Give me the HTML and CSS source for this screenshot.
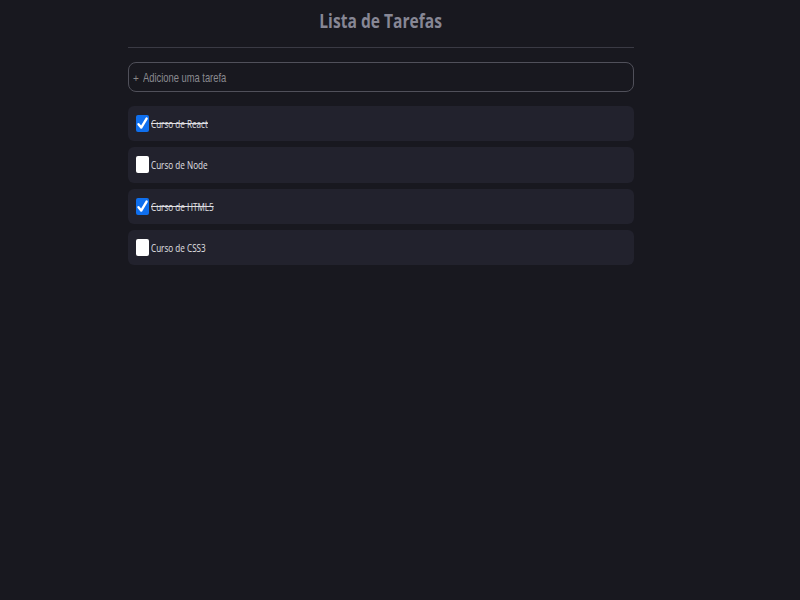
FILE: index.html
```html
<!DOCTYPE html>
<html lang="pt">
<head>
<meta charset="utf-8">
<link rel="stylesheet" href="styles.css">
<title>Lista de Tarefas</title>
</head>
<body>
<main class="app">
  <h1 class="title"><span class="title-text">Lista de Tarefas</span></h1>
  <hr class="divider">
  <div class="add">
    <span class="plus">+</span>
    <input class="add-input" type="text" placeholder="Adicione uma tarefa">
  </div>
  <ul class="list">
    <li class="item"><input type="checkbox" class="check" checked><span class="label done">Curso de React</span></li>
    <li class="item"><input type="checkbox" class="check"><span class="label">Curso de Node</span></li>
    <li class="item"><input type="checkbox" class="check" checked><span class="label done">Curso de HTML5</span></li>
    <li class="item"><input type="checkbox" class="check"><span class="label">Curso de CSS3</span></li>
  </ul>
</main>
</body>
</html>
```
FILE: styles.css
```css
html, body {
  margin: 0;
  height: 100%;
  background: #18181f;
}
body {
  font-family: "Open Sans", "Liberation Sans", sans-serif;
  color: #ddd;
}
.app {
  width: 506px;
  margin: 0 0 0 128px;
}
.title {
  margin: 0;
  padding-top: 6px;
  height: 33px;
  text-align: center;
  font-size: 20px;
  line-height: 30px;
  font-weight: 700;
  color: #878795;
}
.title-text {
  display: inline-block;
  transform: scaleX(0.78);
  transform-origin: center;
}
.divider {
  border: 0;
  border-top: 1px solid #3a3a44;
  margin: 8px 0 14px;
}
.add {
  display: flex;
  align-items: center;
  height: 28px;
  border: 1px solid #50505a;
  border-radius: 8px;
  padding: 0 0 0 4px;
  gap: 4px;
  overflow: hidden;
}
.plus {
  color: #888;
  font-family: "Liberation Sans", sans-serif;
  font-size: 10px;
  margin-top: 2px;
}
.add-input {
  flex: 1;
  background: transparent;
  border: 0;
  outline: none;
  font-family: "Liberation Sans", sans-serif;
  font-size: 13px;
  color: #ccc;
  padding: 0;
  transform: scaleX(0.72);
  transform-origin: left center;
}
.add-input::placeholder {
  color: #8a8a90;
}
.list {
  list-style: none;
  margin: 14px 0 0;
  padding: 0;
  display: flex;
  flex-direction: column;
  gap: 6px;
}
.item {
  display: flex;
  align-items: center;
  height: 35.3px;
  background: #22222d;
  border-radius: 6px;
  padding: 0 8px;
}
.check {
  appearance: none;
  -webkit-appearance: none;
  margin: 0 2px 0 0;
  width: 13px;
  height: 17px;
  border-radius: 2px;
  background: #ffffff;
  flex: none;
}
.check:checked {
  background: #0f6fee url("data:image/svg+xml;utf8,<svg xmlns='http://www.w3.org/2000/svg' width='13' height='17' viewBox='0 0 13 17'><path d='M2.5 9.2 L5.2 12.6 L10.6 3.6' fill='none' stroke='white' stroke-width='2.4' stroke-linecap='round' stroke-linejoin='round'/></svg>") no-repeat center;
}
.label {
  display: inline-block;
  font-size: 11px;
  color: #e0e0e4;
  transform: scaleX(0.74);
  transform-origin: left center;
  white-space: nowrap;
}
.label.done {
  text-decoration: line-through;
}
```
